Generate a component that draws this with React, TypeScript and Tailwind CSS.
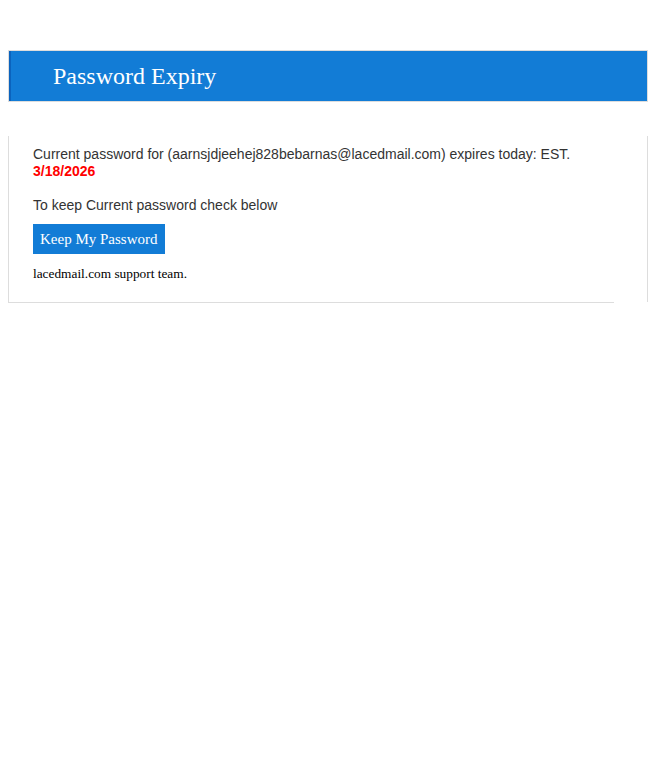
export default function App() {
  return (
    <div className="min-h-[768px] bg-white pl-2 pt-[50px]">
      <div className="flex h-[52px] items-center border border-[#dddddd] bg-[#127cd6]">
        <div className="h-full w-[2px] bg-[#0b63bd]" />
        <h1
          className="ml-[42px] text-[24px] font-normal text-white"
          style={{ fontFamily: '"Liberation Serif", "Times New Roman", serif' }}
        >
          Password Expiry
        </h1>
      </div>

      <div className="mt-[34px] flex">
        <div className="w-[606px] border-b border-l border-[#dddddd] pb-[20px] pl-6 pt-[10px]">
          <div
            className="text-[14px] leading-[17px] text-[#333333]"
            style={{ fontFamily: '"Liberation Sans", Arial, sans-serif' }}
          >
            <p className="w-[600px]">
              Current password for (aarnsjdjeehej828bebarnas@lacedmail.com) expires today: EST.
              <br />
              <span className="font-bold text-[#ff0000]">3/18/2026</span>
            </p>
            <p className="mt-[17px]">To keep Current password check below</p>
          </div>
          <button
            type="button"
            className="mt-[10px] h-[30px] bg-[#127cd6] px-[7px] text-[15px] text-white"
            style={{ fontFamily: '"Liberation Serif", "Times New Roman", serif' }}
          >
            Keep My Password
          </button>
          <p
            className="mt-[12px] text-[13.33px] leading-[16px] text-black"
            style={{ fontFamily: '"Liberation Serif", "Times New Roman", serif' }}
          >
            lacedmail.com support team.
          </p>
        </div>
        <div className="flex-1" />
        <div className="mb-px w-px bg-[#dddddd]" />
      </div>
    </div>
  );
}
